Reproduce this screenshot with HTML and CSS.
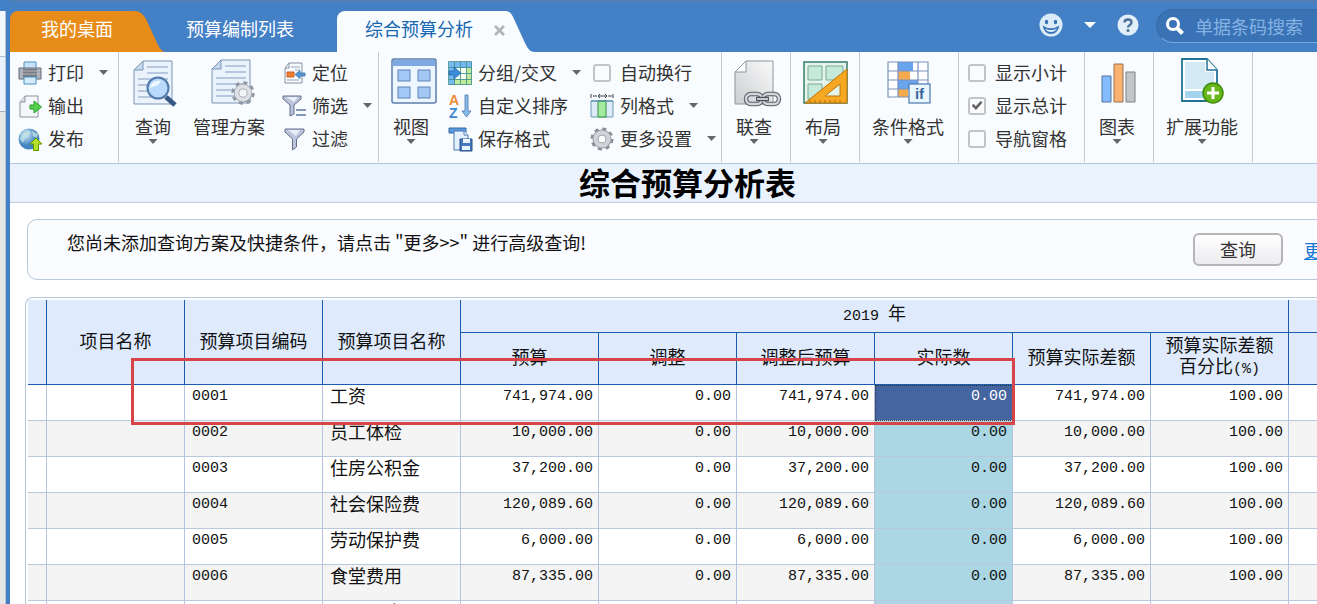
FILE: index.html
```html
<!DOCTYPE html>
<html lang="zh-CN">
<head>
<meta charset="utf-8">
<title>综合预算分析</title>
<link rel="stylesheet" href="styles.css">
</head>
<body>
<div class="app">
  <aside class="side"><div class="side-top"></div><div class="side-mid"></div><div class="side-list"></div></aside>
  <main class="main">
    <header class="topbar">
      <nav class="tabs">
        <a class="tab tab-home" href="#">我的桌面</a>
        <svg class="tail tail-home" width="34" height="41" viewBox="0 0 34 41"><path d="M0 0H2C8 0 11 3 14 8L25 32C28 38 30 41 34 41H0Z"/></svg>
        <a class="tab tab-plain" href="#">预算编制列表</a>
        <div class="tab tab-active"><a href="#">综合预算分析</a><button class="close" aria-label="关闭"><svg width="11" height="11" viewBox="0 0 11 11"><path d="M1 1L10 10M10 1L1 10" stroke="#b3b3b3" stroke-width="2.6"/></svg></button></div>
        <svg class="tail tail-active" width="30" height="41" viewBox="0 0 30 41"><path d="M0 0C5 0 7 3 9 8L20 32C23 38 25 41 30 41H0Z"/></svg>
      </nav>
      <div class="tools">
        <button class="plain" aria-label="表情"><svg width="24" height="24" viewBox="0 0 24 24"><circle cx="12" cy="12" r="11.500" fill="#dcebf8"/><ellipse cx="7.500" cy="9" rx="1.700" ry="2.200" fill="#3872b4"/><ellipse cx="16.500" cy="9" rx="1.700" ry="2.200" fill="#3872b4"/><path d="M3.500 12.500Q12 18 20.500 12.500Q18.500 21 12 21T3.500 12.500Z" fill="#3872b4"/><path d="M6 15.500Q12 18.500 18 15.500Q16 19 12 19T6 15.500" fill="#dcebf8"/></svg></button>
        <button class="plain" aria-label="展开"><svg width="12" height="6" viewBox="0 0 12 6"><path d="M0 0H12L6 6Z" fill="#fff"/></svg></button>
        <button class="plain help" aria-label="帮助"><svg width="22" height="22" viewBox="0 0 22 22"><circle cx="11" cy="11" r="10.500" fill="#e2eefa"/><path d="M7.500 8.500C7.500 4.500 14.500 4.500 14.500 8.500C14.500 11 11 10.800 11 13.500" fill="none" stroke="#4d7096" stroke-width="2.400"/><circle cx="11" cy="16.500" r="1.500" fill="#4d7096"/></svg></button>
        <label class="search"><svg width="20" height="20" viewBox="0 0 20 20"><circle cx="8" cy="8" r="5.500" fill="none" stroke="#fff" stroke-width="3"/><path d="M12 12L17.500 17.500" stroke="#fff" stroke-width="4"/></svg><input type="text" placeholder="单据条码搜索" aria-label="单据条码搜索"></label>
      </div>
    </header>

    <section class="ribbon">
      <div class="group group-output">
        <div class="stack">
          <button class="item"><svg class="ic" viewBox="0 0 24 24"><path d="M6 1H18V9H6Z" fill="#c9e4f8" stroke="#4b91c2"/><path d="M1 7H23V18H1Z" fill="#adb4be" stroke="#646b78"/><path d="M5 8H19V16H5Z" fill="#777c84"/><path d="M5 10H19M5 13H19" stroke="#b5b5b5"/><path d="M6 16H18V23H6Z" fill="#d5ebfb" stroke="#4b91c2"/></svg><span>打印</span><i class="caret"></i></button>
          <button class="item"><svg class="ic" viewBox="0 0 24 24"><path d="M7 2H20V23H2V8Z" fill="#f5f7fa" stroke="#8b929b"/><path d="M7 2V8H2" fill="#dbe0e6" stroke="#8b929b"/><path d="M12 11H16V7L23.500 13L16 19V15H12Z" fill="#57d04c" stroke="#259f2a"/></svg><span>输出</span></button>
          <button class="item"><svg class="ic" viewBox="0 0 24 24"><defs><radialGradient id="globe" cx=".35" cy=".3"><stop offset="0" stop-color="#d4ecff"/><stop offset="1" stop-color="#4484bd"/></radialGradient></defs><circle cx="11" cy="12" r="10.500" fill="url(#globe)"/><path d="M4 7L9 3L13 5L11 9L7 11L5 16L2 12ZM14 4L20 7L19 11L15 9Z" fill="#bfe0e2" opacity=".8"/><path d="M18 11L24 17H20.500V23.500H15.500V17H12Z" fill="#b6df28" stroke="#5f9800"/></svg><span>发布</span></button>
        </div>
      </div>

      <div class="group group-query">
        <button class="big"><svg class="bigic" viewBox="-2 -1 46 48"><path d="M11 2H40V45H2V11Z" fill="#eaf2fb" stroke="#7d94b3"/><path d="M11 2V11H2Z" fill="#c6d8ee" stroke="#7d94b3"/><path d="M15 8H36M15 14H36M6 20H36M6 26H36M6 32H36M6 38H36" stroke="#a6bad5" stroke-width="1.500"/><path d="M34 38L43 46" stroke="#365985" stroke-width="5"/><circle cx="26" cy="29" r="10.500" fill="#b9dafa" stroke="#4f79aa" stroke-width="2"/><path d="M18 29Q20 20 29 22Q27 27 18 29" fill="#eef7ff"/></svg><span>查询</span><i class="caret"></i></button>
        <button class="big"><svg class="bigic" viewBox="-4 0 46 48"><path d="M11 2H40V45H2V11Z" fill="#eaf2fb" stroke="#7d94b3"/><path d="M11 2V11H2Z" fill="#c6d8ee" stroke="#7d94b3"/><path d="M15 8H36M15 14H36M6 20H36M6 26H36M6 32H30M6 38H30" stroke="#a6bad5" stroke-width="1.500"/><circle cx="33" cy="35" r="10" fill="none" stroke="#9299a3" stroke-width="3.500" stroke-dasharray="4 3.854"/><circle cx="33" cy="35" r="6.500" fill="#f3f4f6" stroke="#969da7" stroke-width="5.500"/><circle cx="33" cy="35" r="6.500" fill="none" stroke="#dde0e5" stroke-width="4"/></svg><span>管理方案</span></button>
        <div class="stack">
          <button class="item"><svg class="ic" viewBox="0 0 24 24"><path d="M7 2H20V22H3V7Z" fill="#f7f9fc" stroke="#85929f"/><path d="M7 2V7H3" fill="none" stroke="#85929f"/><path d="M9 6H18M13 9H18M5 19H17" stroke="#9aa9ba"/><path d="M5 11H12V16H5Z" fill="#ed8131" stroke="#c96220"/><path d="M13 13.500L18 9.500V12H23V15H18V17.500Z" fill="#5596d5" stroke="#2d6da8" stroke-width=".7"/></svg><span>定位</span></button>
          <button class="item"><svg class="ic" viewBox="0 0 24 24"><path d="M1 2H19V5L12 11V20L8 22V11L1 5Z" fill="#bcc4dc" stroke="#646f8c"/><path d="M4 3H16L12 8Z" fill="#e9edf7"/><path d="M14 16H24M14 21H24" stroke="#5f77a0" stroke-width="1.500"/></svg><span>筛选</span><i class="caret"></i></button>
          <button class="item"><svg class="ic" viewBox="0 0 24 24"><path d="M3 2H22V5L14.500 12V20L10.500 23V12L3 5Z" fill="#bcc4dc" stroke="#646f8c"/><path d="M6 3H18L14 9Z" fill="#e9edf7"/></svg><span>过滤</span></button>
        </div>
      </div>

      <div class="group group-view">
        <button class="big"><svg class="bigic" viewBox="-3 0 46 48"><rect x="1" y="1" width="44" height="44" rx="2" fill="#edf5ff" stroke="#5e7fae" stroke-width="1.500"/><path d="M2 2H44V8H2Z" fill="#7ea9e2"/><g fill="#a4c8f5" stroke="#5e84b6"><rect x="7" y="12" width="12" height="11"/><rect x="27" y="12" width="12" height="11"/><rect x="7" y="29" width="12" height="11"/><rect x="27" y="29" width="12" height="11"/></g></svg><span>视图</span><i class="caret"></i></button>
        <div class="stack">
          <button class="item"><svg class="ic" viewBox="0 0 24 24"><path d="M1 1H24V7H1Z" fill="#77b8f0"/><path d="M1 7H7V24H1Z" fill="#77b8f0"/><path d="M7 7H24V24H7Z" fill="#bfe99b"/><path d="M7 7H18V18H7Z" fill="#f6fff0"/><path d="M.5 .5H23.500V23.500H.5ZM6.500 .5V23.500M12.500 .5V23.500M18.500 .5V23.500M.5 6.500H23.500M.5 12.500H23.500M.5 18.500H23.500" fill="none" stroke="#3b8c88" stroke-width=".8"/><path d="M1 10H6V6L13 12L6 18V14H1Z" fill="#3c8dd9" stroke="#1e65ab" stroke-width=".7"/></svg><span>分组/交叉</span><i class="caret"></i></button>
          <button class="item"><svg class="ic" viewBox="0 0 24 24"><text x="1" y="11" class="az az-a">A</text><text x="1" y="24" class="az az-z">Z</text><path d="M17 1H20V17H23L18.500 23L14 17H17Z" fill="#8abce8" stroke="#4777ac" stroke-width=".8"/></svg><span>自定义排序</span></button>
          <button class="item"><svg class="ic" viewBox="0 0 24 24"><path d="M1 1H18V6H1Z" fill="#5699dc" stroke="#35689f"/><path d="M6 4H16L20 8V23H6Z" fill="#e4f1ff" stroke="#4a79b1"/><path d="M16 4V8H20" fill="#fff" stroke="#4a79b1"/><path d="M12 12H24V24H12Z" fill="#4578bd" stroke="#284f89"/><path d="M15 12H22V16H15ZM14 19H22V23H14Z" fill="#e9f2ff"/></svg><span>保存格式</span></button>
        </div>
        <div class="stack">
          <label class="item"><input type="checkbox"><span>自动换行</span></label>
          <button class="item"><svg class="ic" viewBox="0 0 24 24"><path d="M1 0V4M23 0V4M3 2H7M9 2H16M18 2H22M10 0L8 2L10 4M15 0L17 2L15 4" fill="none" stroke="#394651"/><path d="M1 7H23V23H1Z" fill="#dcebf6" stroke="#6f9bb9"/><path d="M8 7H16V23H8Z" fill="#a3eb9e" stroke="#348f40"/><path d="M1 7H23" stroke="#4888a3"/></svg><span>列格式</span><i class="caret"></i></button>
          <button class="item"><svg class="ic" viewBox="0 0 24 24"><circle cx="12" cy="12" r="10" fill="none" stroke="#8a8f97" stroke-width="3" stroke-dasharray="4 3.854"/><circle cx="12" cy="12" r="6.500" fill="#fff" stroke="#858a92" stroke-width="6"/><circle cx="12" cy="12" r="6.500" fill="none" stroke="#d0d3d8" stroke-width="4.500"/></svg><span>更多设置</span><i class="caret"></i></button>
        </div>
      </div>

      <div class="group group-two"><button class="big"><svg class="bigic" viewBox="-3 0 46 48"><defs><linearGradient id="sheet" x1="1" y1="0" x2="0" y2="1"><stop offset="0" stop-color="#fafafa"/><stop offset="1" stop-color="#cbcdd0"/></linearGradient></defs><path d="M12 3H39V46H1V14Z" fill="url(#sheet)" stroke="#8f9499"/><path d="M12 3V14H1Z" fill="#fff" stroke="#8f9499"/><g fill="none" stroke="#595f66" stroke-width="4.500"><rect x="12" y="36" width="16" height="10" rx="5"/><rect x="29" y="36" width="16" height="10" rx="5"/></g><g fill="none" stroke="#d2d5d9" stroke-width="2.400"><rect x="12" y="36" width="16" height="10" rx="5"/><rect x="29" y="36" width="16" height="10" rx="5"/></g><path d="M22 41H35" stroke="#4f545b" stroke-width="4.500"/><path d="M23 41H34" stroke="#c6c9cd" stroke-width="2"/></svg><span>联查</span><i class="caret"></i></button></div>

      <div class="group group-two"><button class="big"><svg class="bigic" viewBox="-3 0 46 48"><path d="M1 4H44V45H1Z" fill="#e5f5ed" stroke="#397d69" stroke-width="1.500"/><path d="M5 8H19V22H5ZM23 8H40V22H23ZM5 26H19V41H5Z" fill="#c5ead9" stroke="#79ab99"/><path d="M44 11V45H2Z" fill="#f6a823" stroke="#bd7608"/><path d="M37 26V38H22Z" fill="#e3f4e9" stroke="#bd7608"/><path d="M7 45V42M12 45V42M17 45V42M22 45V42M27 45V42M32 45V42M37 45V42" stroke="#ad6b0c"/></svg><span>布局</span><i class="caret"></i></button></div>

      <div class="group group-four"><button class="big"><svg class="bigic" viewBox="0 0 46 48"><path d="M3 4H43V39H3Z" fill="#fff"/><path d="M13 4H28V13H13ZM13 22H33V31H13Z" fill="#69a4ef"/><path d="M13 13H25V22H13ZM13 31H23V39H13Z" fill="#f5aa4d"/><path d="M3 4H43V39H3ZM13 4V39M33 4V39M3 13H43M3 22H43M3 31H43" fill="none" stroke="#7b91bd" stroke-width="1.200"/><rect x="24" y="26" width="21" height="19" fill="#e9f5ff" stroke="#487bac" stroke-width="1.200"/><text x="34.500" y="41" text-anchor="middle" class="if-mark">if</text></svg><span>条件格式</span><i class="caret"></i></button></div>

      <div class="group group-show">
        <div class="stack">
          <label class="item"><input type="checkbox"><span>显示小计</span></label>
          <label class="item"><input type="checkbox" checked><span>显示总计</span></label>
          <label class="item"><input type="checkbox"><span>导航窗格</span></label>
        </div>
      </div>

      <div class="group group-two"><button class="big"><svg class="bigic" viewBox="-2 0 46 48"><path d="M6 18H15V44H6Z" fill="#84bcff" stroke="#55739d"/><path d="M18 6H27V44H18Z" fill="#fbb26e" stroke="#997058"/><path d="M30 14H39V44H30Z" fill="#c3c6c9" stroke="#7a7e83"/></svg><span>图表</span><i class="caret"></i></button></div>

      <div class="group group-four"><button class="big"><svg class="bigic" viewBox="0 -1 46 48"><path d="M3 0H28L38 11V42H3Z" fill="#fff" stroke="#247395" stroke-width="1.800"/><path d="M6 3H26V13H35V30H6Z" fill="#d3eaf4"/><path d="M6 32H35V39H6Z" fill="#a5d2ed"/><path d="M28 0V11H38" fill="#fff" stroke="#247395" stroke-width="1.500"/><circle cx="34" cy="34" r="10" fill="#69b81b" stroke="#3e8c0d" stroke-width="1.500"/><path d="M34 28V40M28 34H40" stroke="#fff" stroke-width="3"/></svg><span>扩展功能</span><i class="caret"></i></button></div>
    </section>

    <h1 class="title">综合预算分析表</h1>

    <section class="query">
      <p>您尚未添加查询方案及快捷条件，请点击 "更多&gt;&gt;" 进行高级查询!</p>
      <button class="query-btn">查询</button>
      <a class="more" href="#">更多&gt;&gt;</a>
    </section>

    <section class="grid">
      <table>
        <colgroup><col class="c-mark"><col span="10" class="c-data"></colgroup>
        <thead>
          <tr class="h-year"><th rowspan="2"></th><th rowspan="2">项目名称</th><th rowspan="2">预算项目编码</th><th rowspan="2">预算项目名称</th><th colspan="6"><span class="num">2019 </span>年</th><th></th></tr>
          <tr class="h-col"><th>预算</th><th>调整</th><th>调整后预算</th><th>实际数</th><th>预算实际差额</th><th>预算实际差额<br>百分比<span class="num">(%)</span></th><th></th></tr>
        </thead>
        <tbody>
          <tr><td></td><td></td><td class="code">0001</td><td class="name">工资</td><td>741,974.00</td><td>0.00</td><td>741,974.00</td><td class="actual selected">0.00</td><td>741,974.00</td><td>100.00</td><td></td></tr>
          <tr><td></td><td></td><td class="code">0002</td><td class="name">员工体检</td><td>10,000.00</td><td>0.00</td><td>10,000.00</td><td class="actual">0.00</td><td>10,000.00</td><td>100.00</td><td></td></tr>
          <tr><td></td><td></td><td class="code">0003</td><td class="name">住房公积金</td><td>37,200.00</td><td>0.00</td><td>37,200.00</td><td class="actual">0.00</td><td>37,200.00</td><td>100.00</td><td></td></tr>
          <tr><td></td><td></td><td class="code">0004</td><td class="name">社会保险费</td><td>120,089.60</td><td>0.00</td><td>120,089.60</td><td class="actual">0.00</td><td>120,089.60</td><td>100.00</td><td></td></tr>
          <tr><td></td><td></td><td class="code">0005</td><td class="name">劳动保护费</td><td>6,000.00</td><td>0.00</td><td>6,000.00</td><td class="actual">0.00</td><td>6,000.00</td><td>100.00</td><td></td></tr>
          <tr><td></td><td></td><td class="code">0006</td><td class="name">食堂费用</td><td>87,335.00</td><td>0.00</td><td>87,335.00</td><td class="actual">0.00</td><td>87,335.00</td><td>100.00</td><td></td></tr>
          <tr><td></td><td></td><td></td><td class="name">员工医疗</td><td></td><td></td><td></td><td class="actual"></td><td></td><td></td><td></td></tr>
        </tbody>
      </table>
      <div class="mark"></div>
    </section>
  </main>
</div>
</body>
</html>
```
FILE: styles.css
```css
* { box-sizing: border-box; }
html, body { height: 100%; }
body {
  margin: 0;
  overflow: hidden;
  background: #4480c6;
  font: 18px/24px "Noto Sans CJK SC", sans-serif;
  color: #111;
}
button { margin: 0; padding: 0; border: 0; background: none; font: inherit; color: inherit; }
a { color: inherit; text-decoration: none; }
svg { display: block; flex: none; overflow: visible; }

.app { display: flex; height: 100vh; }
.side { flex: none; width: 6px; margin-right: 4px; padding-top: 11px; display: flex; flex-direction: column; background: #4480c6; }
.side > div { border-right: 1px solid #b9c4d2; }
.side-top { height: 46px; background: #f2f7fc; border-bottom: 1px solid #a9bfda; }
.side-mid { height: 54px; background: #eaf3fd; }
.side-list { flex: 1; background: #e5e6e7; border-top: 1px solid #a9abad; }
.main { flex: 1; min-width: 0; display: flex; flex-direction: column; background: #fff; overflow: hidden; }

/* tab bar */
.topbar { flex: none; height: 52px; display: flex; justify-content: space-between; align-items: flex-end; background: linear-gradient(#5380b3, #4480c6 4px); }
.tabs { display: flex; }
.tab { height: 41px; display: flex; align-items: center; padding-bottom: 8px; white-space: nowrap; }
.tab-home { padding-left: 31px; padding-right: 19px; border-top-left-radius: 8px; background: #e78c19; color: #fff; }
.tail-home { fill: #e78c19; }
.tab-plain { padding-left: 20px; padding-right: 43px; color: #fff; }
.tab-active { padding-left: 28px; gap: 21px; border-top-left-radius: 8px; background: #f9fcff; color: #1767b1; }
.tail-active { fill: #f9fcff; }
.close { padding-top: 6px; }
.tools { align-self: flex-start; display: flex; align-items: center; gap: 21px; padding-top: 9px; margin-right: -48px; }
.tools .plain { padding-bottom: 2px; }
.search { display: flex; align-items: center; gap: 10px; width: 209px; height: 34px; margin-left: -4px; padding-left: 8px; border: 1px solid #376ba7; border-bottom-color: #78a8e0; border-radius: 17px; background: #3973b5; }
.search input { flex: 1; min-width: 0; padding: 0; border: 0; outline: 0; background: none; font: inherit; color: #fff; }
.search input::placeholder { color: #86b2e3; opacity: 1; }

/* ribbon */
.ribbon { flex: none; display: flex; height: 112px; background: #f9fcff; border-bottom: 1px solid #b3c5da; color: #333; white-space: nowrap; }
.group { display: flex; align-items: flex-start; margin-bottom: 1px; padding-top: 4px; border-right: 1px solid #c4cad2; }
.stack { display: flex; flex-direction: column; }
.item { display: flex; align-items: center; height: 33px; gap: 6px; }
.item span { margin-bottom: 2px; }
.ic { width: 24px; height: 24px; }
.caret { width: 9px; height: 5px; background: #666; clip-path: polygon(0 0, 100% 0, 50% 100%); }
.item .caret { margin-left: 9px; }
.big { display: flex; flex-direction: column; align-items: center; padding-top: 2px; }
.bigic { width: 46px; height: 48px; margin-bottom: 8px; }
.big .caret { margin-top: 1px; }
.group-output { padding-left: 8px; padding-right: 10px; }
.group-query { padding-left: 11px; padding-right: 6px; gap: 17px; }
.group-view { padding-left: 9px; padding-right: 5px; gap: 9px; }
.group-view .big { margin-right: 5px; }
.group-two { padding-left: 9px; padding-right: 13px; }
.group-four { padding-left: 12px; padding-right: 14px; }
.group-show { padding-left: 6px; padding-right: 17px; }
input[type="checkbox"] { appearance: none; width: 18px; height: 18px; margin: 0 3px; border: 2px solid #c2c4c7; border-radius: 3px; background: #fafbfc; display: grid; place-items: center; }
input[type="checkbox"]:checked::after { content: ""; width: 11px; height: 9px; background: #626262; clip-path: polygon(0 50%, 18% 32%, 38% 58%, 82% 0, 100% 18%, 40% 100%); }
.az { font: bold 14px/12px "Liberation Sans", sans-serif; }
.az-a { fill: #ed8932; }
.az-z { fill: #3d87cf; }
.if-mark { font: bold 15px "Liberation Sans", sans-serif; fill: #3b669c; }

.title { flex: none; margin: 0; height: 39px; border-bottom: 1px solid #c2cddc; background: #eaf3fd; font-size: 31px; font-weight: 700; line-height: 36px; text-align: center; color: #000; padding-left: 48px; }

/* quick query */
.query { flex: none; display: flex; align-items: center; height: 61px; margin: 16px -60px 0 17px; padding: 0 16px 0 39px; border: 1px solid #b9c8da; border-radius: 10px; background: #fbfcff; white-space: nowrap; }
.query p { margin: 0; padding-bottom: 15px; }
.query-btn { width: 90px; height: 33px; margin-left: auto; margin-right: 21px; padding-bottom: 2px; border: 2px solid #b5b5b9; border-radius: 6px; background: linear-gradient(#fff, #ececf0); color: #333; }
.more { color: #1879d2; text-decoration: underline; }

/* budget grid */
.grid { position: relative; flex: 1; min-height: 0; margin: 17px 0 0 15px; padding: 2px 0 0 2px; border: 1px solid #b5c6da; border-right: 0; border-bottom: 0; border-top-left-radius: 8px; overflow: hidden; }
table { table-layout: fixed; width: 1399px; border-collapse: separate; border-spacing: 0; }
.c-mark { width: 19px; }
.c-data { width: 138px; }
th { padding: 0 0 4px; border: 0 solid #1c5cad; border-right-width: 1px; border-bottom-width: 1px; background: #dfebfd; font-weight: 400; line-height: 21px; }
.num { font: 15px/20px "Liberation Mono", monospace; white-space: pre; }
.h-year { height: 33px; }
.h-col { height: 52px; }
td { height: 36px; padding: 0 5px 0 0; border-right: 1px solid #b3c3e1; border-bottom: 1px solid #b9c8dd; vertical-align: top; text-align: right; font: 15px/24px "Liberation Mono", monospace; }
tbody tr:nth-child(even) td { background: #f4f4f4; }
td.code { padding: 0 0 0 7px; text-align: left; }
td.name { padding: 0 0 0 7px; text-align: left; font: 18px/21px "Noto Sans CJK SC", sans-serif; }
tbody tr td.actual { background: #abd6e4; }
tbody tr td.selected { background: #4565a0; color: #fff; outline: 1px dotted #333; outline-offset: -1px; }
.mark { position: absolute; left: 105px; top: 60px; width: 884px; height: 67px; border: 3px solid #d64448; }
```
